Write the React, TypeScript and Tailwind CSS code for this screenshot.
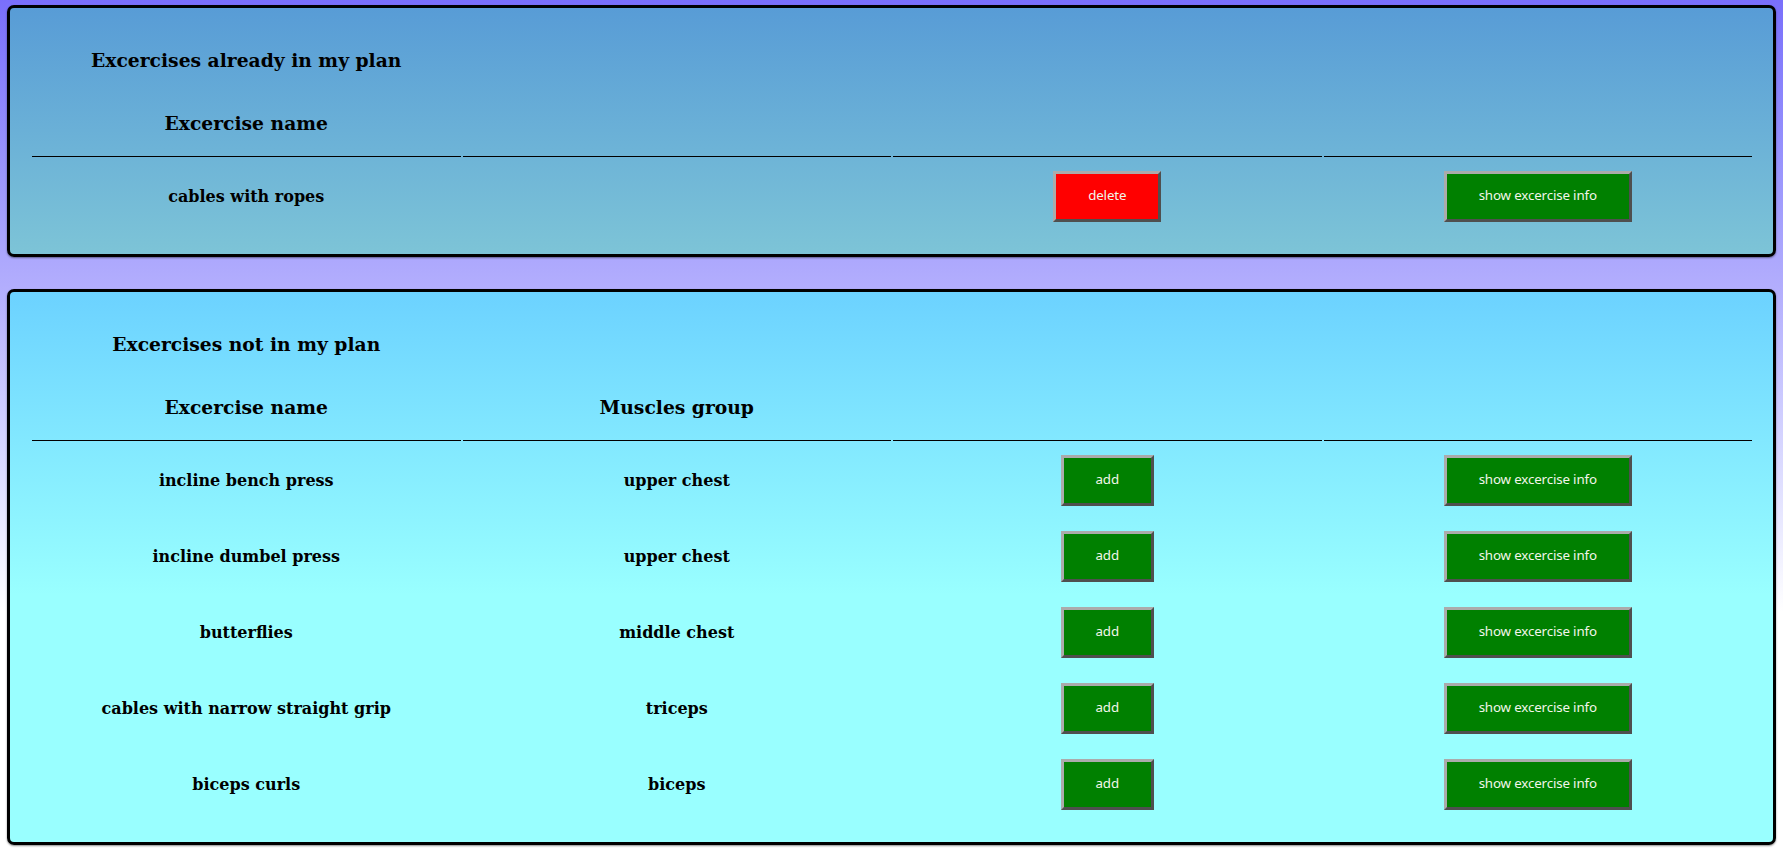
import React from 'react'

type Excercise = { name: string; muscles: string }

const inPlan: Excercise[] = [{ name: 'cables with ropes', muscles: '' }]

const notInPlan: Excercise[] = [
  { name: 'incline bench press', muscles: 'upper chest' },
  { name: 'incline dumbel press', muscles: 'upper chest' },
  { name: 'butterflies', muscles: 'middle chest' },
  { name: 'cables with narrow straight grip', muscles: 'triceps' },
  { name: 'biceps curls', muscles: 'biceps' },
]

// ─── Button ──────────────────────────────────────────────────────────────────

function PlanButton({ label, color }: { label: string; color: 'red' | 'green' }) {
  return (
    <button
      className={`h-[51px] px-8 border-[3px] border-t-[#ababab] border-l-[#ababab] border-r-[#4f4f4f] border-b-[#4f4f4f] text-[13.33px] tracking-[-0.15px] text-[#f2f6ea] font-['Noto_Sans',sans-serif] ${
        color === 'red' ? 'bg-[#ff0000]' : 'bg-[#008000]'
      }`}
    >
      {label}
    </button>
  )
}

// ─── Card with table ─────────────────────────────────────────────────────────

function PlanTable({
  title,
  rows,
  showMuscles,
  action,
  className,
}: {
  title: string
  rows: Excercise[]
  showMuscles: boolean
  action: 'delete' | 'add'
  className: string
}) {
  return (
    <div
      className={`mx-[7px] border-[3px] border-black rounded-[7px] pl-[20px] pr-[19px] pt-[20px] pb-[19px] shadow-[0_1px_2px_rgba(0,0,0,0.45)] ${className}`}
    >
      <table className="w-full table-fixed border-separate border-spacing-[2px] font-['DejaVu_Serif',serif] text-black">
        <thead>
          <tr className="h-[58px]">
            <th className="w-1/4 pt-[2px] text-[18.72px] font-bold">{title}</th>
            <th className="w-1/4" />
            <th className="w-1/4" />
            <th className="w-1/4" />
          </tr>
          <tr className="h-[67px]">
            <th className="border-b border-black text-[18.72px] font-bold">Excercise name</th>
            <th className="border-b border-black text-[18.72px] font-bold">{showMuscles ? 'Muscles group' : ''}</th>
            <th className="border-b border-black" />
            <th className="border-b border-black" />
          </tr>
        </thead>
        <tbody>
          {rows.map((r) => (
            <tr key={r.name} className="h-[74px]">
              <td className="text-center pt-[1px] text-[16px] font-bold">{r.name}</td>
              <td className="text-center pt-[1px] text-[16px] font-bold">{showMuscles ? r.muscles : ''}</td>
              <td className="text-center">
                <PlanButton label={action} color={action === 'delete' ? 'red' : 'green'} />
              </td>
              <td className="text-center">
                <PlanButton label="show excercise info" color="green" />
              </td>
            </tr>
          ))}
        </tbody>
      </table>
    </div>
  )
}

export default function App() {
  return (
    <div className="min-h-screen pt-[5px] pb-[5px] bg-linear-to-b from-[#7a6ffb] via-[#b3aefd] via-34% to-white to-72%">
      <PlanTable
        title="Excercises already in my plan"
        rows={inPlan}
        showMuscles={false}
        action="delete"
        className="bg-linear-to-b from-[#589cd6] to-[#7dc4d7]"
      />
      <PlanTable
        title="Excercises not in my plan"
        rows={notInPlan}
        showMuscles={true}
        action="add"
        className="mt-[32px] bg-linear-to-b from-[#6cd2ff] to-[#99ffff] to-55%"
      />
    </div>
  )
}
